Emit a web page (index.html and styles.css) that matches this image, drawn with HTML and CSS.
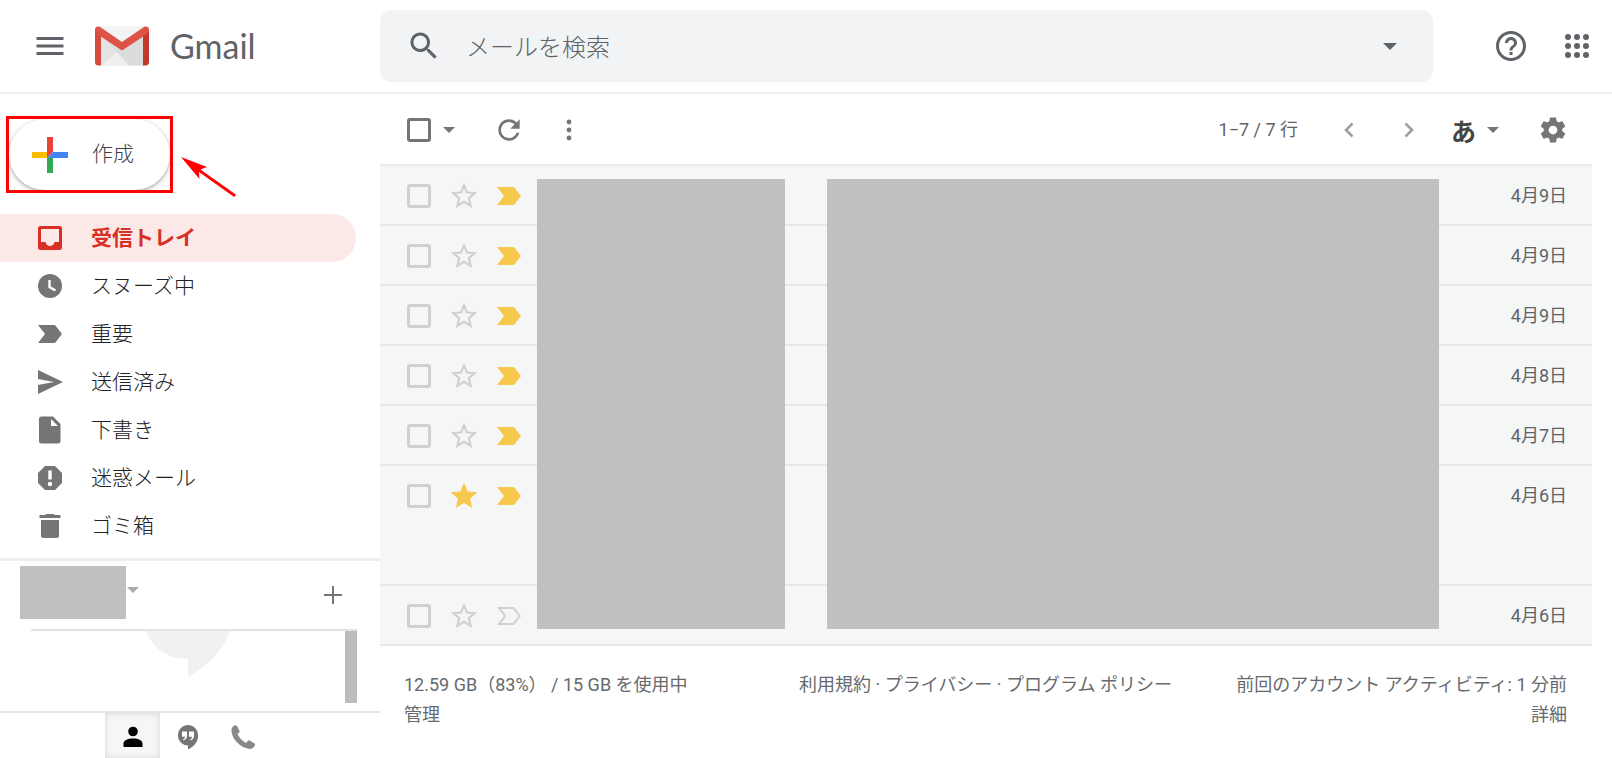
FILE: index.html
```html
<!DOCTYPE html>
<html lang="ja">
<head>
<meta charset="utf-8">
<meta name="viewport" content="width=device-width, initial-scale=1">
<title>Gmail</title>
<link rel="stylesheet" href="styles.css">
</head>
<body>
<svg class="symbols" aria-hidden="true">
  <symbol id="star" viewBox="0 0 24 24"><path fill-rule="evenodd" d="M22 9.24l-7.19-.62L12 2 9.19 8.63 2 9.24l5.46 4.73L5.82 21 12 17.27 18.18 21l-1.63-7.03L22 9.24zM12 15.4l-3.76 2.27 1-4.28-3.32-2.88 4.38-.38L12 6.1l1.71 4.04 4.38.38-3.32 2.88 1 4.28L12 15.4z"/></symbol>
  <symbol id="star-full" viewBox="0 0 24 24"><path d="M12 17.27L18.18 21l-1.64-7.03L22 9.24l-7.19-.61L12 2 9.19 8.63 2 9.24l5.46 4.73L5.82 21z"/></symbol>
  <symbol id="mark" viewBox="0 0 24 18"><path d="M0 0h16q1 0 1.600.8L24 9l-6.400 8.200q-.6.8-1.600.8H0l7-9z"/></symbol>
  <symbol id="mark-empty" viewBox="0 0 24 18"><path fill-rule="evenodd" d="M0 0h16q1 0 1.600.8L24 9l-6.400 8.200q-.6.8-1.600.8H0l7-9zM4 2l5.500 7L4 16h12l5.500-7L16 2z"/></symbol>
  <symbol id="caret" viewBox="0 0 12 6"><path d="M0 0h12L6 6z"/></symbol>
</svg>

<header class="header">
  <div class="brand">
    <button class="icon-btn menu-btn" aria-label="メインメニュー">
      <svg class="icon-36" viewBox="0 0 24 24"><path d="M3 18h18v-2H3v2zm0-5h18v-2H3v2zm0-7v2h18V6H3z"/></svg>
    </button>
    <a class="logo" href="#">
      <svg class="logo-mark" viewBox="0 0 54 40" aria-hidden="true">
        <path fill="#e9e9e9" d="M4 0h46v39.500H4z"/>
        <path fill="#dcdcdc" d="M6 7l21 17L48 7v32.500H34L20 25.500z"/>
        <path fill="#e3e3e3" d="M6 8l16 18.500L6 39.500z"/>
        <path fill="#efefef" d="M6 39.500l16-13 12 13z"/>
        <path fill="#f2f3f2" d="M6 0h42L27 16z"/>
        <path fill="#d54b3d" d="M0 4h6v35.500H3.500Q0 39.500 0 36z"/>
        <path fill="#c0392b" d="M48 4h6v32q0 3.500-3.500 3.500H48z"/>
        <path fill="#de5145" d="M0 4Q0 .5 3 .5q1.500 0 3 1.200L27 16 48 1.700Q49.500.5 51 .5q3 0 3 3.500 0 2.500-2 4L27 24.500 2 8Q0 6.500 0 4z"/>
      </svg>
      <span class="logo-text">Gmail</span>
    </a>
  </div>
  <form class="search" role="search">
    <button type="button" class="icon-btn" aria-label="検索">
      <svg class="icon-36" viewBox="0 0 24 24"><path d="M15.500 14h-.79l-.28-.27C15.410 12.590 16 11.110 16 9.500 16 5.910 13.090 3 9.500 3S3 5.910 3 9.500 5.910 16 9.500 16c1.610 0 3.090-.59 4.230-1.570l.27.28v.79l5 4.990L20.490 19l-4.990-5zm-6 0C7.010 14 5 11.990 5 9.500S7.010 5 9.500 5 14 7.010 14 9.500 11.990 14 9.500 14z"/></svg>
    </button>
    <input class="search-input" type="text" aria-label="メールを検索" placeholder="メールを検索">
    <button type="button" class="icon-btn" aria-label="検索オプション"><svg class="search-caret"><use href="#caret"/></svg></button>
  </form>
  <div class="header-actions">
    <button class="icon-btn" aria-label="ヘルプ">
      <svg class="icon-36" viewBox="0 0 24 24"><path d="M11 18h2v-2h-2v2zm1-16C6.480 2 2 6.480 2 12s4.480 10 10 10 10-4.480 10-10S17.520 2 12 2zm0 18c-4.410 0-8-3.590-8-8s3.590-8 8-8 8 3.590 8 8-3.590 8-8 8zm0-14c-2.210 0-4 1.790-4 4h2c0-1.100.9-2 2-2s2 .9 2 2c0 2-3 1.750-3 5h2c0-2.250 3-2.500 3-5 0-2.210-1.790-4-4-4z"/></svg>
    </button>
    <button class="icon-btn" aria-label="Google アプリ">
      <svg class="icon-36" viewBox="0 0 36 36"><circle cx="9" cy="9" r="3"/><circle cx="18" cy="9" r="3"/><circle cx="27" cy="9" r="3"/><circle cx="9" cy="18" r="3"/><circle cx="18" cy="18" r="3"/><circle cx="27" cy="18" r="3"/><circle cx="9" cy="27" r="3"/><circle cx="18" cy="27" r="3"/><circle cx="27" cy="27" r="3"/></svg>
    </button>
  </div>
</header>

<div class="body">
  <aside class="sidebar">
    <div class="compose-area">
      <div class="highlight">
        <button class="compose">
          <svg class="icon-36" viewBox="0 0 36 36"><path fill="#ea4335" d="M15 0h6v15l-6 6z"/><path fill="#fbbc04" d="M0 15h15v6H0z"/><path fill="#34a853" d="M15 21h6v15h-6z"/><path fill="#4285f4" d="M21 15h15v6H15z"/></svg>
          <span>作成</span>
        </button>
      </div>
      <svg class="arrow" viewBox="0 0 56 40" aria-hidden="true"><path fill="red" d="M0 0l26 10-6.500 2.500 35.500 25.200-1.800 2.300-35.200-25 .5 7z"/></svg>
    </div>
    <nav class="nav">
      <a class="nav-item active" href="#"><svg class="icon-30" viewBox="0 0 30 30"><path fill-rule="evenodd" d="M5.500 3h19Q27 3 27 5.500v19q0 2.500-2.500 2.500h-19Q3 27 3 24.500v-19Q3 3 5.500 3zM6 6v13h4.500q1 4 4.500 4t4.500-4H24V6z"/></svg><span>受信トレイ</span></a>
      <a class="nav-item" href="#"><svg class="icon-30" viewBox="0 0 30 30"><circle cx="15" cy="15" r="12"/><path fill="none" stroke="#fff" stroke-width="2.400" d="M14.500 9v7l6 3.500"/></svg><span>スヌーズ中</span></a>
      <a class="nav-item" href="#"><svg class="icon-30" viewBox="0 0 30 30"><path d="M3 6h16q1 0 1.600.8L27 15l-6.400 8.200q-.6.8-1.600.8H3l7-9z"/></svg><span>重要</span></a>
      <a class="nav-item" href="#"><svg class="icon-30" viewBox="0 0 30 30"><path d="M3 3l25 12L3 27v-9l16-3-16-3z"/></svg><span>送信済み</span></a>
      <a class="nav-item" href="#"><svg class="icon-30" viewBox="0 0 30 30"><path fill-rule="evenodd" d="M6.500 1.500H18L25.500 9v17q0 2.500-2.500 2.500H6.500Q4 28.500 4 26V4q0-2.500 2.500-2.500zM16 4v7h7z"/></svg><span>下書き</span></a>
      <a class="nav-item" href="#"><svg class="icon-30" viewBox="0 0 30 30"><path d="M10 3h10l7 7v10l-7 7H10l-7-7V10z"/><path fill="#fff" d="M13.300 7.500h3.400v9h-3.400z"/><circle cx="15" cy="21" r="2.200" fill="#fff"/></svg><span>迷惑メール</span></a>
      <a class="nav-item" href="#"><svg class="icon-30" viewBox="0 0 30 30"><path d="M4.500 4H10l1.500-1h7L20 4h5.500v3h-21zM6 9h18v15.500q0 2.500-2.500 2.500h-13Q6 27 6 24.500z"/></svg><span>ゴミ箱</span></a>
    </nav>
    <section class="chat">
      <div class="chat-head">
        <div class="user-mask"></div>
        <svg class="chat-caret"><use href="#caret"/></svg>
        <button class="icon-btn chat-add" aria-label="新しい会話"><svg viewBox="0 0 18 18" class="plus"><path d="M8 0h2v8h8v2h-8v8H8v-8H0V8h8z"/></svg></button>
      </div>
      <div class="chat-list">
        <svg class="bubble" viewBox="0 0 84 46" aria-hidden="true"><path fill="#f1f1f1" d="M0 0h84C77 20 60 36 42 46V28C22 28 6 17 0 0z"/></svg>
        <div class="scrollbar"></div>
      </div>
      <div class="chat-tabs">
        <button class="tab selected" aria-label="連絡先"><svg class="tab-icon" viewBox="0 0 24 24"><circle cx="12" cy="6.500" r="4.800"/><path d="M2.500 22v-3.500c0-3 4-5 9.500-5s9.500 2 9.500 5V22z"/></svg></button>
        <button class="tab" aria-label="ハングアウト"><svg class="tab-icon" viewBox="0 0 24 24"><path fill-rule="evenodd" d="M12 0a10.200 10.200 0 0 1 10.200 10.200C22.200 16.500 18 21.500 12 24.500v-4.100A10.200 10.200 0 0 1 12 0zM6 6.500v5.200h3q0 2-1.700 2.500v1.200Q11 14.500 11 11V6.500zm7 0v5.200h3q0 2-1.700 2.500v1.200Q18 14.500 18 11V6.500z"/></svg></button>
        <button class="tab" aria-label="電話"><svg class="tab-icon call" viewBox="0 0 24 24"><path d="M.5 4.500Q1 1 4.500.2q1-.2 1.500.8l2.500 5q.4 1-.4 1.700L6.500 9q2 5 8.500 9l2-2.200q.7-.8 1.600-.3l5 3q.8.5.4 1.400-1.500 4-5.500 4C9 22.500 0 13.500.5 4.500z"/></svg></button>
      </div>
    </section>
  </aside>

  <main class="main">
    <div class="toolbar">
      <input type="checkbox" class="check dark" aria-label="選択">
      <button class="icon-btn select-btn" aria-label="選択メニュー"><svg class="caret"><use href="#caret"/></svg></button>
      <button class="icon-btn" aria-label="更新"><svg class="icon-32" viewBox="0 0 24 24"><path d="M17.650 6.350C16.200 4.900 14.210 4 12 4c-4.420 0-7.990 3.580-7.990 8s3.570 8 7.990 8c3.730 0 6.840-2.550 7.730-6h-2.080c-.82 2.330-3.040 4-5.650 4-3.310 0-6-2.690-6-6s2.690-6 6-6c1.660 0 3.140.69 4.220 1.780L13 11h7V4l-2.350 2.350z"/></svg></button>
      <button class="icon-btn more-btn" aria-label="その他"><svg class="icon-32" viewBox="0 0 32 32"><circle cx="16" cy="8" r="2.400"/><circle cx="16" cy="16" r="2.400"/><circle cx="16" cy="24" r="2.400"/></svg></button>
      <span class="count">1−7 / 7 行</span>
      <button class="icon-btn pager" aria-label="新しい"><svg class="icon-30" viewBox="0 0 30 30"><path fill="none" stroke="#9e9e9e" stroke-width="2.500" d="M18.500 8.500L12 15l6.500 6.500"/></svg></button>
      <button class="icon-btn pager" aria-label="古い"><svg class="icon-30" viewBox="0 0 30 30"><path fill="none" stroke="#9e9e9e" stroke-width="2.500" d="M11.500 8.500L18 15l-6.500 6.500"/></svg></button>
      <button class="icon-btn ime" aria-label="入力ツール"><span class="ime-text">あ</span><svg class="caret"><use href="#caret"/></svg></button>
      <button class="icon-btn gear" aria-label="設定"><svg class="icon-30" viewBox="0 0 24 24"><path d="M19.430 12.980c.04-.32.07-.64.07-.98s-.03-.66-.07-.98l2.110-1.650c.19-.15.24-.42.12-.64l-2-3.460c-.12-.22-.39-.3-.61-.22l-2.490 1c-.52-.4-1.080-.73-1.690-.98l-.38-2.650C14.460 2.180 14.250 2 14 2h-4c-.25 0-.46.18-.49.42l-.38 2.650c-.61.25-1.170.59-1.690.98l-2.490-1c-.23-.09-.49 0-.61.22l-2 3.460c-.13.22-.07.49.12.64l2.110 1.650c-.04.32-.07.65-.07.98s.03.66.07.98l-2.110 1.650c-.19.15-.24.42-.12.64l2 3.460c.12.22.39.3.61.22l2.490-1c.52.4 1.080.73 1.690.98l.38 2.650c.03.24.24.42.49.42h4c.25 0 .46-.18.49-.42l.38-2.650c.61-.25 1.170-.59 1.690-.98l2.490 1c.23.09.49 0 .61-.22l2-3.460c.12-.22.07-.49-.12-.64l-2.110-1.650zM12 15.500c-1.930 0-3.500-1.570-3.500-3.500s1.570-3.500 3.500-3.500 3.500 1.570 3.500 3.500-1.570 3.500-3.500 3.500z"/></svg></button>
    </div>

    <div class="mail">
      <table class="mail-table">
        <tbody>
          <tr><td class="c-check"><input type="checkbox" class="check" aria-label="メール 1"></td><td class="c-star"><svg class="star"><use href="#star"/></svg></td><td class="c-mark"><svg class="mark"><use href="#mark"/></svg></td><td class="c-date">4月9日</td></tr>
          <tr><td class="c-check"><input type="checkbox" class="check" aria-label="メール 2"></td><td class="c-star"><svg class="star"><use href="#star"/></svg></td><td class="c-mark"><svg class="mark"><use href="#mark"/></svg></td><td class="c-date">4月9日</td></tr>
          <tr><td class="c-check"><input type="checkbox" class="check" aria-label="メール 3"></td><td class="c-star"><svg class="star"><use href="#star"/></svg></td><td class="c-mark"><svg class="mark"><use href="#mark"/></svg></td><td class="c-date">4月9日</td></tr>
          <tr><td class="c-check"><input type="checkbox" class="check" aria-label="メール 4"></td><td class="c-star"><svg class="star"><use href="#star"/></svg></td><td class="c-mark"><svg class="mark"><use href="#mark"/></svg></td><td class="c-date">4月8日</td></tr>
          <tr><td class="c-check"><input type="checkbox" class="check" aria-label="メール 5"></td><td class="c-star"><svg class="star"><use href="#star"/></svg></td><td class="c-mark"><svg class="mark"><use href="#mark"/></svg></td><td class="c-date">4月7日</td></tr>
          <tr class="tall"><td class="c-check"><input type="checkbox" class="check" aria-label="メール 6"></td><td class="c-star"><svg class="star on"><use href="#star-full"/></svg></td><td class="c-mark"><svg class="mark"><use href="#mark"/></svg></td><td class="c-date">4月6日</td></tr>
          <tr><td class="c-check"><input type="checkbox" class="check" aria-label="メール 7"></td><td class="c-star"><svg class="star"><use href="#star"/></svg></td><td class="c-mark"><svg class="mark off"><use href="#mark-empty"/></svg></td><td class="c-date">4月6日</td></tr>
        </tbody>
      </table>
      <div class="masks"><div class="mask"></div><div class="mask"></div></div>
    </div>

    <footer class="footer">
      <div>12.59 GB（83%） / 15 GB を使用中<br><a href="#">管理</a></div>
      <div class="foot-center"><a href="#">利用規約</a> · <a href="#">プライバシー</a> · <a href="#">プログラム ポリシー</a></div>
      <div class="foot-right">前回のアカウント アクティビティ: 1 分前<br><a href="#">詳細</a></div>
    </footer>
  </main>
</div>
</body>
</html>
```
FILE: styles.css
```css
* { box-sizing: border-box; }

body {
  margin: 0;
  min-height: 100vh;
  display: flex;
  flex-direction: column;
  background: #fff;
  color: #202124;
  font-family: Roboto, "Noto Sans CJK JP", sans-serif;
  font-weight: 400;
  font-size: 18px;
}

a { color: inherit; text-decoration: none; }
svg { display: block; flex: none; fill: currentColor; }
.symbols { position: absolute; width: 0; height: 0; }
.icon-30 { width: 30px; height: 30px; }
.icon-32 { width: 32px; height: 32px; }
.icon-36 { width: 36px; height: 36px; }

.icon-btn {
  display: flex;
  align-items: center;
  justify-content: center;
  flex: none;
  padding: 0;
  border: 0;
  background: none;
  color: inherit;
  font: inherit;
}

/* Header */
.header {
  display: flex;
  align-items: flex-start;
  height: 94px;
  padding-top: 10px;
  border-bottom: 2px solid #eee;
  color: #5f6368;
}
.brand {
  display: flex;
  align-items: center;
  flex: none;
  width: 380px;
  height: 72px;
  padding-left: 32px;
  gap: 27px;
}
.logo { display: flex; align-items: center; gap: 21px; }
.logo-mark { width: 54px; height: 40px; }
.logo-text { font: 400 34px/40px Lato, sans-serif; }

.search {
  display: flex;
  align-items: center;
  flex: 1;
  height: 72px;
  padding: 0 36px 0 26px;
  border-radius: 12px;
  background: #f1f3f4;
}
.search-input {
  flex: 1;
  min-width: 0;
  margin: 0 24px;
  padding: 0;
  border: 0;
  outline: 0;
  background: none;
  color: #5f6368;
  font: 300 24px/36px "Noto Sans CJK JP", sans-serif;
}
.search-input::placeholder { color: #5f6368; opacity: 1; }
.search-caret { width: 14px; height: 7px; }
.header-actions {
  display: flex;
  align-items: center;
  height: 72px;
  gap: 30px;
  padding: 0 17px 0 60px;
}

/* Layout */
.body { display: flex; flex: 1; }
.sidebar {
  display: flex;
  flex-direction: column;
  flex: none;
  width: 380px;
}
.main { flex: 1; min-width: 0; padding-right: 20px; }

/* Compose */
.compose-area {
  display: flex;
  align-items: center;
  gap: 8px;
  padding: 22px 6px 21px;
}
.highlight { border: 3px solid #f00; overflow: hidden; }
.compose {
  display: flex;
  align-items: center;
  width: 161px;
  height: 71px;
  gap: 24px;
  padding: 0 23px;
  border: 0;
  border-radius: 36px;
  background: #fff;
  color: #3c4043;
  box-shadow: 0 1px 3px rgba(60, 64, 67, .4), 0 3px 6px rgba(60, 64, 67, .15);
  font: 300 21px/30px "Noto Sans CJK JP", sans-serif;
}
.compose span { padding-bottom: 6px; }
.arrow { width: 56px; height: 40px; margin-top: 40px; margin-bottom: -4px; }

/* Navigation */
.nav-item {
  display: flex;
  align-items: center;
  height: 48px;
  margin-right: 24px;
  padding-left: 35px;
  gap: 26px;
  border-radius: 0 24px 24px 0;
  font: 300 21px/30px "Noto Sans CJK JP", sans-serif;
}
.nav-item span { padding-bottom: 4px; }
.nav-item svg { color: #757575; }
.nav-item.active { background: #fce8e6; color: #d93025; font-weight: 700; }
.nav-item.active svg { color: #d93025; }

/* Chat */
.chat { margin-top: auto; border-top: 3px solid #eee; }
.chat-head {
  display: flex;
  align-items: flex-start;
  height: 68px;
  padding: 5px 38px 0 20px;
}
.user-mask { width: 106px; height: 53px; background: #c0c0c0; }
.chat-caret { width: 12px; height: 6px; margin: 21px 0 0 1px; color: #aaa; }
.chat-add { margin: 20px 0 0 auto; color: #757575; }
.plus { width: 18px; height: 18px; }
.chat-list {
  display: flex;
  height: 74px;
  margin: 0 23px 8px 31px;
  border-top: 2px solid #e3e3e3;
}
.bubble { width: 84px; height: 46px; margin-left: 115px; }
.scrollbar { width: 12px; height: 72px; margin-left: auto; background: #bcbcbc; }
.chat-tabs {
  display: flex;
  height: 47px;
  padding-left: 105px;
  border-top: 2px solid #e3e3e3;
}
.tab {
  display: flex;
  align-items: center;
  justify-content: center;
  width: 55px;
  padding: 2px 0 0;
  border: 0;
  background: none;
  color: #757575;
}
.tab.selected {
  background: #f6f6f6;
  box-shadow: inset 0 0 6px rgba(0, 0, 0, .13);
  color: #000;
}
.tab-icon { width: 24px; height: 24px; }
.tab-icon.call { color: #888; }

/* Toolbar */
.toolbar {
  display: flex;
  align-items: center;
  height: 70px;
  padding: 2px 24px 0 27px;
  color: #757575;
}
.check {
  appearance: none;
  display: block;
  flex: none;
  width: 24px;
  height: 24px;
  margin: 0;
  border: 3px solid #cfd0d0;
  border-radius: 3px;
}
.check.dark { border-color: #757575; }
.caret { width: 12px; height: 6px; }
.select-btn { margin: 0 38px 0 12px; }
.more-btn { margin-left: 28px; }
.count { margin-left: auto; padding-bottom: 4px; color: #5f6368; }
.pager { margin-left: 30px; }
.count + .pager { margin-left: 36px; }
.ime { gap: 11px; margin-left: 27px; }
.ime-text { color: #444; font: 700 25px/30px "Noto Sans CJK JP", sans-serif; }
.gear { margin-left: 39px; }

/* Mail list */
.mail { position: relative; }
.mail-table {
  width: 100%;
  table-layout: fixed;
  border-collapse: separate;
  border-spacing: 0;
  border-top: 2px solid #eaecec;
  background: #f5f7f7;
}
.mail-table td {
  height: 60px;
  padding: 0;
  border-bottom: 2px solid #e6e8e8;
  vertical-align: top;
}
.mail-table .tall td { height: 120px; }
.mail-table .c-check { width: 68px; padding: 18px 0 0 27px; }
.mail-table .c-star { width: 49px; padding-top: 14px; }
.mail-table .c-mark { width: 40px; padding-top: 21px; }
.mail-table .c-date {
  padding: 15px 25px 0 0;
  color: #5f6368;
  line-height: 30px;
  text-align: right;
}
.star { width: 32px; height: 32px; color: #cfd0d0; }
.star.on { color: #f6c94c; }
.mark { width: 24px; height: 18px; color: #f6c94c; }
.mark.off { color: #cfd0d0; }
.masks {
  position: absolute;
  inset: 15px 153px 17px 157px;
  display: grid;
  grid-template-columns: 248px 1fr;
  gap: 42px;
}
.mask { background: #c0c0c0; }

/* Footer */
.footer {
  display: grid;
  grid-template-columns: 1fr auto 1fr;
  padding: 24px 25px 0 24px;
  color: #666a6e;
  line-height: 30px;
}
.foot-right { text-align: right; }
```
